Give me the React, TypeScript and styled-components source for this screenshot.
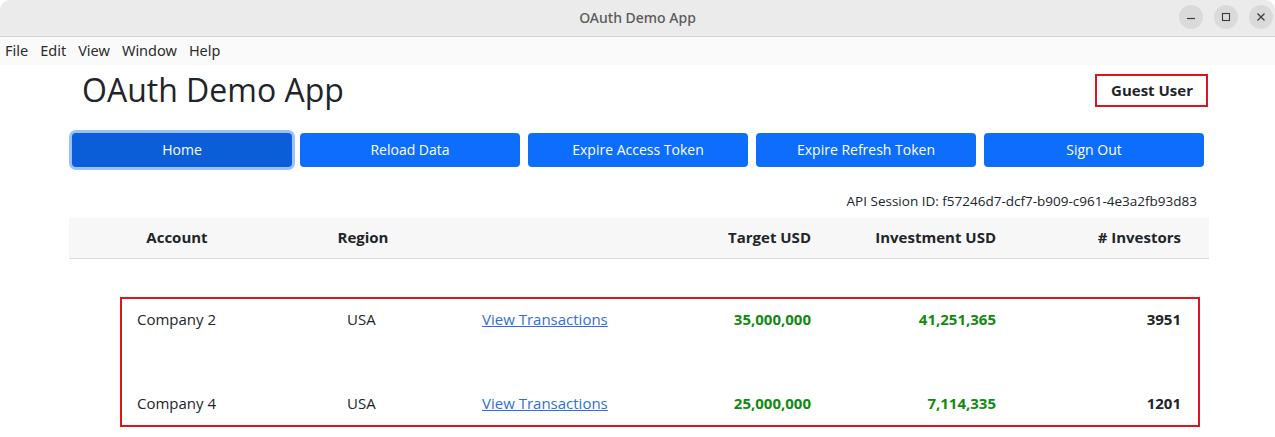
import React from 'react';
import styled, { createGlobalStyle } from 'styled-components';

type Account = {
  name: string;
  region: string;
  target: string;
  investment: string;
  investors: number;
};

const ACCOUNTS: Account[] = [
  { name: 'Company 2', region: 'USA', target: '35,000,000', investment: '41,251,365', investors: 3951 },
  { name: 'Company 4', region: 'USA', target: '25,000,000', investment: '7,114,335', investors: 1201 },
];

const ACTIONS = ['Home', 'Reload Data', 'Expire Access Token', 'Expire Refresh Token', 'Sign Out'];
const MENU = ['File', 'Edit', 'View', 'Window', 'Help'];

const GlobalStyle = createGlobalStyle`
  html, body {
    margin: 0;
    padding: 0;
    background: #ffffff;
    font-family: "Open Sans", "Noto Sans", "Liberation Sans", sans-serif;
    color: #212529;
  }
  * {
    box-sizing: border-box;
  }
`;

const App = () => {
  return (
    <>
      <GlobalStyle />
      <StyledWindow>
        <StyledTitleBar>
          <span />
          <StyledWindowTitle>OAuth Demo App</StyledWindowTitle>
          <StyledControls>
            <StyledControl aria-label="minimize">
              <svg width="10" height="10" viewBox="0 0 10 10">
                <path d="M1 6.5h8" stroke="#3c3c3c" strokeWidth="1.2" />
              </svg>
            </StyledControl>
            <StyledControl aria-label="maximize">
              <svg width="10" height="10" viewBox="0 0 10 10">
                <rect x="1.5" y="1.5" width="7" height="7" fill="none" stroke="#3c3c3c" strokeWidth="1.1" />
              </svg>
            </StyledControl>
            <StyledControl aria-label="close">
              <svg width="10" height="10" viewBox="0 0 10 10">
                <path d="M1.5 1.5l7 7M8.5 1.5l-7 7" stroke="#3c3c3c" strokeWidth="1.3" />
              </svg>
            </StyledControl>
          </StyledControls>
        </StyledTitleBar>
        <StyledMenuBar>
          {MENU.map((item) => (
            <span key={item}>{item}</span>
          ))}
        </StyledMenuBar>

        <StyledPage>
          <StyledTopRow>
            <StyledHeading>OAuth Demo App</StyledHeading>
            <StyledUserBox>Guest User</StyledUserBox>
          </StyledTopRow>

          <StyledButtonRow>
            {ACTIONS.map((label) => (
              <StyledButton key={label} $active={label === 'Home'}>
                {label}
              </StyledButton>
            ))}
          </StyledButtonRow>

          <StyledSession>API Session ID: f57246d7-dcf7-b909-c961-4e3a2fb93d83</StyledSession>

          <StyledHeaderRow>
            <StyledHeadCell $align="center">Account</StyledHeadCell>
            <StyledHeadCell $align="center">Region</StyledHeadCell>
            <StyledHeadCell $align="center" />
            <StyledHeadCell $align="right">Target USD</StyledHeadCell>
            <StyledHeadCell $align="right">Investment USD</StyledHeadCell>
            <StyledHeadCell $align="right" $pad={28}>
              # Investors
            </StyledHeadCell>
          </StyledHeaderRow>

          <StyledRowsBox>
            {ACCOUNTS.map((account) => (
              <StyledDataRow key={account.name}>
                <StyledCell>{account.name}</StyledCell>
                <StyledCell>{account.region}</StyledCell>
                <StyledCell>
                  <StyledLink href="#">View Transactions</StyledLink>
                </StyledCell>
                <StyledCell $align="right" $money>
                  {account.target}
                </StyledCell>
                <StyledCell $align="right" $money>
                  {account.investment}
                </StyledCell>
                <StyledCell $align="right" $bold $pad={17}>
                  {account.investors}
                </StyledCell>
              </StyledDataRow>
            ))}
          </StyledRowsBox>
        </StyledPage>
      </StyledWindow>
    </>
  );
};

const StyledWindow = styled.div`
  width: 1275px;
  height: 437px;
  overflow: hidden;
  background: #ffffff;
`;

const StyledTitleBar = styled.div`
  height: 37px;
  display: grid;
  grid-template-columns: 1fr auto 1fr;
  align-items: center;
  background: #ebebeb;
  border-bottom: 1px solid #d4d4d4;
  border-radius: 10px 10px 0 0;
`;

const StyledWindowTitle = styled.div`
  font-family: "Noto Sans", "Open Sans", sans-serif;
  font-size: 14px;
  font-weight: 500;
  color: #5a5a5a;
  margin-top: -2px;
`;

const StyledControls = styled.div`
  display: flex;
  justify-content: flex-end;
  gap: 11px;
  padding-right: 2px;
  margin-top: -2px;
`;

const StyledControl = styled.button`
  width: 24px;
  height: 24px;
  border-radius: 50%;
  border: none;
  padding: 0;
  background: #dadada;
  display: flex;
  align-items: center;
  justify-content: center;
`;

const StyledMenuBar = styled.div`
  height: 28px;
  display: flex;
  align-items: center;
  gap: 12px;
  padding-left: 5px;
  padding-bottom: 2px;
  background: #fafafa;
  font-family: "Noto Sans", "Open Sans", sans-serif;
  font-size: 14.5px;
  color: #2c2c2c;
`;

const StyledPage = styled.div`
  width: 1140px;
  margin-left: 69px;
`;

const StyledTopRow = styled.div`
  height: 50px;
  display: flex;
  align-items: center;
  justify-content: space-between;
  padding: 0 1px 0 13px;
`;

const StyledHeading = styled.h1`
  margin: 0;
  font-size: 32px;
  font-weight: 500;
  line-height: 1.1;
  color: #212529;
`;

const StyledUserBox = styled.div`
  height: 33px;
  padding: 0 13px 0 14px;
  display: flex;
  align-items: center;
  border: 2px solid #e0141e;
  font-size: 15px;
  font-weight: 700;
  color: #212529;
`;

const StyledButtonRow = styled.div`
  margin-top: 18px;
  display: grid;
  grid-template-columns: repeat(5, 220px);
  gap: 8px;
  padding-left: 3px;
`;

const StyledButton = styled.button<{ $active?: boolean }>`
  height: 34px;
  padding: 0 0 2px;
  border: none;
  border-radius: 4px;
  background: ${({ $active }) => ($active ? '#0b5ed7' : '#0d6efd')};
  box-shadow: ${({ $active }) => ($active ? '0 0 0 3px rgba(49, 132, 253, 0.5)' : 'none')};
  color: #ffffff;
  font-family: "Open Sans", "Noto Sans", sans-serif;
  font-size: 14px;
  cursor: pointer;
`;

const StyledSession = styled.div`
  margin-top: 24px;
  padding-right: 12px;
  text-align: right;
  font-size: 13.5px;
  line-height: 20px;
  color: #212529;
`;

const StyledHeaderRow = styled.div`
  margin-top: 7px;
  height: 41px;
  padding-bottom: 2px;
  display: grid;
  grid-template-columns: 216px 156px 210px 175px 185px 1fr;
  align-items: center;
  background: #f7f7f7;
  border-bottom: 1px solid #dcdcdc;
`;

const StyledHeadCell = styled.div<{ $align: 'center' | 'right'; $pad?: number }>`
  text-align: ${({ $align }) => $align};
  padding-right: ${({ $align, $pad }) => ($align === 'right' ? `${$pad ?? 15}px` : '0')};
  font-size: 15px;
  font-weight: 700;
  color: #212529;
`;

const StyledRowsBox = styled.div`
  margin: 38px 0 0 51px;
  width: 1080px;
  border: 2px solid #e0141e;
  display: flex;
  flex-direction: column;
  gap: 42px;
`;

const StyledDataRow = styled.div`
  height: 42px;
  padding-bottom: 2px;
  display: grid;
  grid-template-columns: 210px 135px 200px 159px 185px 1fr;
  align-items: center;
`;

const StyledCell = styled.div<{ $align?: 'left' | 'right'; $money?: boolean; $bold?: boolean; $pad?: number }>`
  text-align: ${({ $align }) => $align ?? 'left'};
  padding-left: ${({ $align }) => ($align === 'right' ? '0' : '15px')};
  padding-right: ${({ $align, $pad }) => ($align === 'right' ? `${$pad ?? 15}px` : '0')};
  font-size: 15px;
  font-weight: ${({ $money, $bold }) => ($money || $bold ? 700 : 400)};
  color: ${({ $money }) => ($money ? '#128a12' : '#212529')};
`;

const StyledLink = styled.a`
  color: #2f6fd6;
  text-decoration: underline;
`;

export default App;
